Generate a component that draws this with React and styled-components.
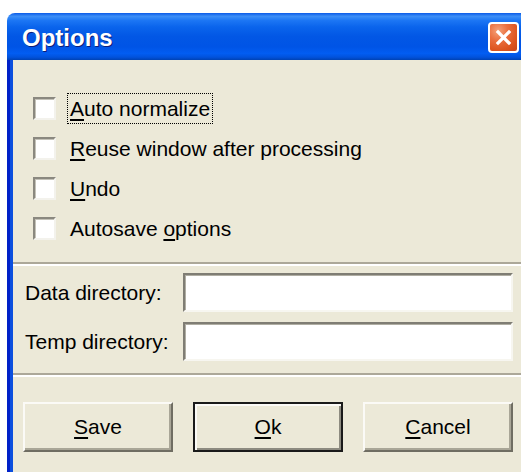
import React from 'react'
import styled, { createGlobalStyle } from 'styled-components'

const GlobalStyle = createGlobalStyle`
body {
  margin: 0;
  background: #fff;
  overflow: hidden;
}
`

const Window = styled.div`
margin: 13px 0 0 7px;
width: 514px;
height: 459px;
display: flex;
flex-direction: column;
border-top-left-radius: 8px;
overflow: hidden;
font-family: "Liberation Sans", Arial, sans-serif;
`

const TitleBar = styled.div`
height: 47px;
flex: none;
display: flex;
align-items: center;
justify-content: space-between;
padding: 0 2px 0 15px;
background: linear-gradient(
  to bottom,
  #0a5be8 0%,
  #3d8ff7 7%,
  #1c76f4 16%,
  #0a64ec 30%,
  #0257e5 50%,
  #0054e6 72%,
  #025df2 86%,
  #0152dc 94%,
  #0042b4 100%
);
`

const Title = styled.span`
color: #fff;
font-size: 24px;
font-weight: bold;
text-shadow: 1px 1px 0 #0a1d7a;
margin-top: 2px;
`

const CloseButton = styled.div`
width: 31px;
height: 31px;
box-sizing: border-box;
border: 2px solid #fff;
border-radius: 4px;
display: flex;
align-items: center;
justify-content: center;
margin-top: 2px;
background: radial-gradient(circle at 30% 25%, #f5a27a 0%, #ea7040 35%, #dd5520 70%, #c8461a 100%);
`

const Frame = styled.div`
flex: 1;
display: flex;
flex-direction: column;
background: #ece9d8;
border-left: 3px solid #0020c8;
box-shadow: inset 3px 0 0 #0b4fde;
padding-left: 3px;
`

const CheckGroup = styled.div`
display: flex;
flex-direction: column;
padding: 28px 0 14px 20px;
`

const CheckRow = styled.div`
height: 40px;
display: flex;
align-items: center;
gap: 11px;
`

const Box = styled.span`
width: 23px;
height: 23px;
box-sizing: border-box;
flex: none;
background: #fff;
border: 2px solid;
border-color: #8a887f #f3f2ec #f3f2ec #8a887f;
box-shadow: inset 1px 1px 0 #c4c2b8;
`

const CheckLabel = styled.span`
display: block;
height: 31px;
line-height: 29px;
box-sizing: border-box;
padding: 0 2px;
font-size: 21px;
color: #000;
white-space: pre;
border: 1px dotted ${p => (p.$focused ? '#000' : 'transparent')};
`

const Key = styled.u`
text-underline-offset: 3px;
text-decoration-thickness: 2px;
`

const Separator = styled.div`
height: 2px;
flex: none;
background: #aca899;
border-bottom: 2px solid #fff;
`

const Fields = styled.div`
display: grid;
grid-template-columns: 158px 1fr;
row-gap: 10px;
align-items: center;
padding: 7px 8px 12px 12px;
`

const FieldLabel = styled.label`
font-size: 21px;
color: #000;
`

const Input = styled.div`
height: 39px;
box-sizing: border-box;
background: #fff;
border: 2px solid;
border-color: #7f7d74 #f7f6f0 #f7f6f0 #7f7d74;
box-shadow: inset 1px 1px 0 #b0aea3;
`

const ButtonRow = styled.div`
display: flex;
gap: 20px;
padding: 25px 8px 0 10px;
`

const Button = styled.div`
width: 150px;
height: 50px;
box-sizing: border-box;
display: flex;
align-items: center;
justify-content: center;
font-size: 21px;
color: #000;
background: #ece9d8;
border: 2px solid;
border-color: ${p => (p.$default ? '#1a1a1a' : '#fbfaf6 #6f6d62 #6f6d62 #fbfaf6')};
box-shadow: ${p =>
  p.$default
    ? 'inset 2px 2px 0 #fbfaf6, inset -2px -2px 0 #8d8b80'
    : 'inset -2px -2px 0 #a9a697'};
`

const options = [
  { key: 'A', rest: 'uto normalize', focused: true },
  { key: 'R', rest: 'euse window after processing' },
  { key: 'U', rest: 'ndo' },
  { pre: 'Autosave ', key: 'o', rest: 'ptions' },
]

const App = () => {
  return (
    <>
      <GlobalStyle />
      <Window>
        <TitleBar>
          <Title>Options</Title>
          <CloseButton>
            <svg width="17" height="17" viewBox="0 0 17 17">
              <path d="M3 3 L14 14 M14 3 L3 14" stroke="#fff" strokeWidth="3.2" strokeLinecap="square" />
            </svg>
          </CloseButton>
        </TitleBar>
        <Frame>
          <CheckGroup>
            {options.map(o => (
              <CheckRow key={o.rest}>
                <Box />
                <CheckLabel $focused={o.focused}>
                  {o.pre}
                  <Key>{o.key}</Key>
                  {o.rest}
                </CheckLabel>
              </CheckRow>
            ))}
          </CheckGroup>
          <Separator />
          <Fields>
            <FieldLabel>Data directory:</FieldLabel>
            <Input />
            <FieldLabel>Temp directory:</FieldLabel>
            <Input />
          </Fields>
          <Separator />
          <ButtonRow>
            <Button><Key>S</Key>ave</Button>
            <Button $default><Key>O</Key>k</Button>
            <Button><Key>C</Key>ancel</Button>
          </ButtonRow>
        </Frame>
      </Window>
    </>
  )
}

export default App
